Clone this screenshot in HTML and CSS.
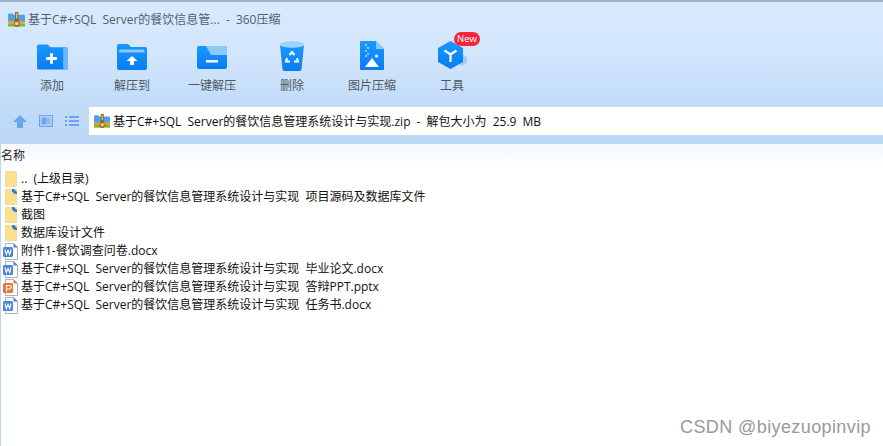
FILE: index.html
```html
<!DOCTYPE html>
<html lang="zh">
<head>
<meta charset="utf-8">
<title>360压缩</title>
<link rel="stylesheet" href="styles.css">
</head>
<body>
<svg class="defs" width="0" height="0">
  <defs>
    <symbol id="zip" viewBox="0 0 18 16">
      <path d="M0 2.500A1 1 0 0 1 1 1.500h3.500l1.500 1.500H17a1 1 0 0 1 1 1V10H0z" fill="#42a5ee"/>
      <rect y="9.500" width="18" height="3" fill="#f59a23"/>
      <rect y="12.500" width="18" height="3" fill="#7cb53c"/>
      <rect x="7.500" y="0" width="3.500" height="15.500" fill="#9a5b22"/>
      <rect x="8.600" y="1" width="1.300" height="6" fill="#e8c98a"/>
      <rect x="7" y="10" width="4.500" height="4.500" rx=".5" fill="#f6d27a" stroke="#7a4a18" stroke-width=".8"/>
    </symbol>
    <symbol id="folder" viewBox="0 0 12 16">
      <path d="M.5.500h11v15H.5z" fill="#fde08e" stroke="#f0d9a0"/>
    </symbol>
    <symbol id="folderb" viewBox="0 0 12 16">
      <path d="M.5.500h11v15H.5z" fill="#fde08e" stroke="#f0d9a0"/>
      <path d="M7 0h2l3 3v2H9.500L7 2.500z" fill="#2f7fd8"/>
    </symbol>
    <symbol id="doc" viewBox="0 0 15 17">
      <path d="M2.500.500h8l4 4v12h-12z" fill="#fff" stroke="#a9b6c6"/>
      <path d="M10.500 0l4.500 4.500h-4.500z" fill="#4c8ad8"/>
      <rect y="4" width="10" height="10" rx="1.500" fill="#4c86dc"/>
      <path d="M2 6.500l1.300 5 1.700-4 1.700 4L8 6.500" fill="none" stroke="#fff" stroke-width="1.100"/>
    </symbol>
    <symbol id="ppt" viewBox="0 0 15 17">
      <path d="M2.500.500h8l4 4v12h-12z" fill="#fff" stroke="#a9b6c6"/>
      <path d="M10.500 0l4.500 4.500h-4.500z" fill="#e8774a"/>
      <rect y="4" width="10" height="10" rx="1.500" fill="#f0703a"/>
      <path d="M3.500 12.500V6.500H6.500a1.600 1.600 0 0 1 0 3.500H3.500" fill="none" stroke="#fff" stroke-width="1.200"/>
    </symbol>
    <linearGradient id="blue" x1="0" y1="0" x2="0" y2="1">
      <stop offset="0" stop-color="#1b97ff"/>
      <stop offset="1" stop-color="#0a7cf5"/>
    </linearGradient>
  </defs>
</svg>
<div class="window">
  <header class="chrome">
    <div class="titlebar">
      <svg class="zip-icon"><use href="#zip"/></svg>
      <span class="title">基于C#+SQL Server的餐饮信息管... - 360压缩</span>
    </div>
    <nav class="toolbar">
      <div class="tool tool-add">
        <svg class="tool-icon" viewBox="0 0 32 26">
          <path d="M0 2a2 2 0 0 1 2-2h9l3 3h16a2 2 0 0 1 2 2v19a2 2 0 0 1-2 2H2a2 2 0 0 1-2-2z" fill="url(#blue)"/>
          <path d="M27 3h3a2 2 0 0 1 2 2v19a2 2 0 0 1-2 2h-3z" fill="#6bb8fb"/>
          <path d="M13.500 9h3v4h4v3h-4v4h-3v-4h-4v-3h4z" fill="#fff"/>
        </svg>
        <span>添加</span>
      </div>
      <div class="tool tool-extract">
        <svg class="tool-icon" viewBox="0 0 30 26">
          <path d="M0 2a2 2 0 0 1 2-2h9l3 3h14a2 2 0 0 1 2 2v19a2 2 0 0 1-2 2H2a2 2 0 0 1-2-2z" fill="url(#blue)"/>
          <path d="M2 7l1-1.500h24l1 3H2z" fill="#8cc8fc"/>
          <path d="M15 12l5.500 5H17v4h-4v-4H9.500z" fill="#fff"/>
        </svg>
        <span>解压到</span>
      </div>
      <div class="tool tool-one">
        <svg class="tool-icon" viewBox="0 0 30 23">
          <path d="M0 2a2 2 0 0 1 2-2h26a2 2 0 0 1 2 2v19a2 2 0 0 1-2 2H2a2 2 0 0 1-2-2z" fill="url(#blue)"/>
          <path d="M9 0h19a2 2 0 0 1 2 2v7H14z" fill="#8cc8fc"/>
          <rect x="9" y="14" width="12" height="2.500" fill="#fff"/>
        </svg>
        <span>一键解压</span>
      </div>
      <div class="tool tool-del">
        <svg class="tool-icon" viewBox="0 0 26 30">
          <path d="M1 4l2.500 24a2 2 0 0 0 2 2h15a2 2 0 0 0 2-2L25 4z" fill="url(#blue)"/>
          <ellipse cx="13" cy="3.500" rx="12.500" ry="3.200" fill="#9ed2fd"/>
          <path d="M10.500 14l2.500-3 2.500 3M18 17l1 3.500h-4M8 17l-1 3.500h4" fill="none" stroke="#fff" stroke-width="2"/>
        </svg>
        <span>删除</span>
      </div>
      <div class="tool tool-pic">
        <svg class="tool-icon" viewBox="0 0 24 29">
          <path d="M1 0h15l8 8v20a1 1 0 0 1-1 1H1a1 1 0 0 1-1-1V1a1 1 0 0 1 1-1z" fill="url(#blue)"/>
          <path d="M16 0l8 8h-8z" fill="#8cc8fc"/>
          <path d="M5 3h2v2H5zM7 6h2v2H7zM5 9h2v2H5zM7 12h2v2H7zM5 14h2v2H5z" fill="#8cc8fc"/>
          <path d="M5 26l7-9 7 9z" fill="#fff"/>
          <circle cx="16.500" cy="15" r="1.600" fill="#fff"/>
        </svg>
        <span>图片压缩</span>
      </div>
      <div class="tool tool-kit">
        <svg class="tool-icon" viewBox="0 0 30 28">
          <path d="M24 13l5 3v6l-5 3-5-3v-6z" fill="#9dcdf9"/>
          <path d="M12.500 0L25 7v14l-12.500 7L0 21V7z" fill="url(#blue)"/>
          <path d="M6.500 9.500l6 4 6-4M12.500 13.500V21" fill="none" stroke="#fff" stroke-width="2.200"/>
        </svg>
        <span class="badge">New</span>
        <span>工具</span>
      </div>
    </nav>
    <div class="addressrow">
      <div class="nav-icons">
        <svg class="nav-up" viewBox="0 0 14 13"><path d="M7 0l7 7h-4v6H4V7H0z" fill="#6ba3ec"/></svg>
        <svg class="nav-view" viewBox="0 0 14 12"><rect x=".6" y=".6" width="12.800" height="10.800" fill="none" stroke="#6ba3ec" stroke-width="1.200"/><rect x="2.500" y="2.500" width="5" height="7" fill="#6ba3ec"/><rect x="7.500" y="2.500" width="4" height="7" fill="#8fbcf2"/></svg>
        <svg class="nav-list" viewBox="0 0 14 10"><path d="M0 0h2v2H0zM4 0h10v2H4zM0 4h2v2H0zM4 4h10v2H4zM0 8h2v2H0zM4 8h10v2H4z" fill="#6ba3ec"/></svg>
      </div>
      <div class="address">
        <svg class="zip-icon"><use href="#zip"/></svg>
        <span>基于C#+SQL Server的餐饮信息管理系统设计与实现.zip - 解包大小为 25.9 MB</span>
      </div>
    </div>
  </header>
  <main class="list">
    <div class="list-head">名称</div>
    <ul class="files">
      <li class="file"><svg class="ficon folder"><use href="#folder"/></svg><span>.. (上级目录)</span></li>
      <li class="file"><svg class="ficon folder"><use href="#folderb"/></svg><span>基于C#+SQL Server的餐饮信息管理系统设计与实现 项目源码及数据库文件</span></li>
      <li class="file"><svg class="ficon folder"><use href="#folderb"/></svg><span>截图</span></li>
      <li class="file"><svg class="ficon folder"><use href="#folderb"/></svg><span>数据库设计文件</span></li>
      <li class="file"><svg class="ficon"><use href="#doc"/></svg><span>附件1-餐饮调查问卷.docx</span></li>
      <li class="file"><svg class="ficon"><use href="#doc"/></svg><span>基于C#+SQL Server的餐饮信息管理系统设计与实现 毕业论文.docx</span></li>
      <li class="file"><svg class="ficon"><use href="#ppt"/></svg><span>基于C#+SQL Server的餐饮信息管理系统设计与实现 答辩PPT.pptx</span></li>
      <li class="file"><svg class="ficon"><use href="#doc"/></svg><span>基于C#+SQL Server的餐饮信息管理系统设计与实现 任务书.docx</span></li>
    </ul>
  </main>
  <div class="watermark">CSDN @biyezuopinvip</div>
</div>
</body>
</html>
```

FILE: styles.css
```css
* { box-sizing: border-box; }
html, body { margin: 0; padding: 0; }
body {
  width: 883px;
  height: 446px;
  overflow: hidden;
  background: #fff;
  font-family: "Open Sans", "Noto Sans CJK SC", sans-serif;
  font-size: 12px;
  word-spacing: 3px;
  color: #1a1a1a;
}
.defs { position: absolute; }
.window { position: relative; height: 446px; display: flex; flex-direction: column; }
.chrome {
  height: 144px;
  flex: none;
  background: linear-gradient(#d7e9fd 0, #d3e7fc 50px, #c0dbf8 105px, #bcd8f6 144px);
  border-top: 2px solid #9fb0c4;
  display: flex;
  flex-direction: column;
}
.titlebar { height: 32px; display: flex; align-items: center; padding: 2px 0 0 8px; gap: 3px; }
.zip-icon { width: 17px; height: 15px; flex: none; }
.title { color: #555f6b; font-size: 12px; white-space: nowrap; }
.toolbar { height: 73px; display: grid; grid-template-columns: repeat(6, 80px); padding: 7px 0 0 12px; align-items: start; }
.tool {
  position: relative;
  height: 54px;
  display: flex;
  flex-direction: column;
  align-items: center;
  color: #4d5864;
  font-size: 12px;
  line-height: 18px;
}
.tool span:last-child { margin-top: auto; white-space: nowrap; }
.tool-icon { flex: none; }
.tool-add .tool-icon { width: 31px; height: 26px; margin-top: 3px; }
.tool-extract .tool-icon { width: 30px; height: 26px; margin-top: 3px; }
.tool-one .tool-icon { width: 30px; height: 23px; margin-top: 5px; }
.tool-del .tool-icon { width: 26px; height: 30px; }
.tool-pic .tool-icon { width: 24px; height: 29px; }
.tool-kit .tool-icon { width: 30px; height: 28px; margin-left: 2px; }
.badge {
  position: absolute;
  top: -9px;
  left: 42px;
  width: 26px;
  height: 14px;
  border-radius: 7px;
  background: #f5263a;
  color: #fff;
  font-size: 9.500px;
  line-height: 14px;
  text-align: center;
}
.addressrow { height: 28px; display: flex; align-items: center; }
.nav-icons { width: 89px; flex: none; display: flex; align-items: center; padding-left: 13px; }
.nav-up { width: 14px; height: 13px; }
.nav-view { width: 14px; height: 12px; margin-left: 12px; }
.nav-list { width: 14px; height: 10px; margin-left: 12px; }
.address {
  flex: 1;
  height: 28px;
  background: #fff;
  display: flex;
  align-items: center;
  padding-left: 5px;
  gap: 3px;
  font-size: 12px;
  color: #111;
  white-space: nowrap;
}
.address .zip-icon { width: 16px; height: 16px; }
.list { flex: 1; background: #fff; border-left: 1px solid #b9d6f5; }
.list-head {
  height: 24px;
  padding: 3px 0 0;
  line-height: 17px;
  background: linear-gradient(#f5f9fe, #fff);
  font-size: 12px;
  color: #222;
}
.files { list-style: none; margin: 0; padding: 2px 0 0; }
.file {
  height: 18px;
  display: flex;
  align-items: center;
  padding-left: 2px;
  line-height: 18px;
  white-space: nowrap;
  color: #111;
  font-size: 12px;
}
.ficon { width: 15px; height: 17px; flex: none; margin-right: 3px; }
.folder { width: 12px; height: 16px; margin-left: 2px; margin-right: 4px; }
.watermark {
  position: absolute;
  right: 12px;
  top: 417px;
  font-family: "Liberation Sans", sans-serif;
  font-size: 18px;
  line-height: 20px;
  word-spacing: 0;
  color: #999;
  letter-spacing: .4px;
  white-space: nowrap;
}
```
